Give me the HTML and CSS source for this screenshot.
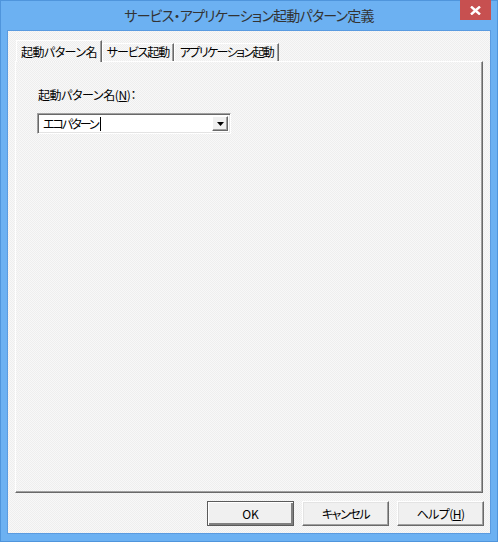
FILE: index.html
```html
<!DOCTYPE html>
<html lang="ja">
<head>
<meta charset="utf-8">
<title>サービス・アプリケーション起動パターン定義</title>
<link rel="stylesheet" href="styles.css">
</head>
<body>
<div class="window">
  <div class="titlebar">
    <div class="title">サービス・アプリケーション起動パターン定義</div>
    <div class="close">
      <svg width="11" height="9" viewBox="0 0 11 9"><path d="M1 0.5 L10 8.5 M10 0.5 L1 8.5" stroke="#fff" stroke-width="2.4" fill="none"/></svg>
    </div>
  </div>
  <div class="client">
    <div class="tabs">
      <div class="tab tab-selected tab-1">起動パターン名</div>
      <div class="tab tab-2">サービス起動</div>
      <div class="tab tab-3">アプリケーション起動</div>
    </div>
    <div class="panel">
      <div class="label">起動パターン名(<u>N</u>)：</div>
      <div class="combo">
        <div class="combo-text">エコパターン<span class="caret"></span></div>
        <div class="combo-btn">
          <svg width="7" height="4" viewBox="0 0 7 4"><path d="M0 0 H7 L3.5 4 Z" fill="#000"/></svg>
        </div>
      </div>
    </div>
    <div class="buttons">
      <div class="btn btn-default">OK</div>
      <div class="btn btn-kana">キャンセル</div>
      <div class="btn btn-help">ヘルプ(<u>H</u>)</div>
    </div>
  </div>
</div>
</body>
</html>
```
FILE: styles.css
```css
html, body {
  margin: 0;
  padding: 0;
  background: #6aaef0;
}
body {
  font-family: "Noto Sans CJK JP", "Noto Sans", sans-serif;
  font-feature-settings: "palt";
  font-size: 12px;
  color: #000;
}
.window {
  box-sizing: border-box;
  width: 498px;
  height: 542px;
  background: #6cb1f2;
  border: 1px solid #4f95dc;
  display: flex;
  flex-direction: column;
}
.titlebar {
  position: relative;
  height: 29px;
  flex: none;
}
.title {
  text-align: center;
  line-height: 28px;
  font-size: 14px;
  letter-spacing: -0.8px;
  color: #333;
}
.close {
  position: absolute;
  top: -1px;
  right: 6px;
  width: 31px;
  height: 20px;
  background: #c75050;
  display: flex;
  align-items: center;
  justify-content: center;
}
.client {
  flex: 1;
  margin: 0 6px 9px 6px;
  border: 1px solid #5a9be0;
  background: repeating-conic-gradient(#eeeeee 0 25%, #f8f8f8 0 50%) 0 0 / 2px 2px;
  padding: 9px 7px 7px 7px;
  display: flex;
  flex-direction: column;
}
.tabs {
  display: flex;
  align-items: flex-end;
  height: 21px;
  padding-left: 1px;
  position: relative;
  z-index: 1;
}
.tab {
  box-sizing: border-box;
  height: 18px;
  border-top: 1px solid #fff;
  border-left: 1px solid #fff;
  border-right: 1px solid #696969;
  box-shadow: inset -1px 0 #a0a0a0;
  text-align: center;
  line-height: 16px;
  white-space: nowrap;
  background: repeating-conic-gradient(#eeeeee 0 25%, #f8f8f8 0 50%) 0 0 / 2px 2px;
}
.tab-selected {
  height: 22px;
  margin-bottom: -1px;
  line-height: 21px;
}
.tab-1 { width: 86px; letter-spacing: -0.5px; }
.tab-2 { width: 72px; letter-spacing: -1.1px; }
.tab-3 { width: 105px; letter-spacing: -1.6px; }
.panel {
  box-sizing: border-box;
  height: 432px;
  border-top: 1px solid #fff;
  border-left: 1px solid #fff;
  border-right: 1px solid #696969;
  border-bottom: 1px solid #696969;
  box-shadow: inset -1px -1px #a0a0a0;
  padding: 24px 20px 0 21px;
}
.label {
  line-height: 17px;
  padding-left: 1px;
  letter-spacing: -0.4px;
}
.combo {
  box-sizing: border-box;
  margin-top: 10px;
  width: 194px;
  height: 21px;
  border-top: 1px solid #a0a0a0;
  border-left: 1px solid #a0a0a0;
  border-right: 1px solid #fff;
  border-bottom: 1px solid #fff;
  box-shadow: inset 1px 1px #696969, inset -1px -1px #e3e3e3;
  background: #fff;
  display: flex;
  align-items: stretch;
  padding: 2px;
}
.combo-text {
  flex: 1;
  padding-left: 3px;
  line-height: 17px;
  letter-spacing: -2px;
  display: flex;
  align-items: center;
}
.caret {
  display: inline-block;
  width: 1px;
  height: 14px;
  background: #000;
  margin-left: 2px;
}
.combo-btn {
  width: 16px;
  box-sizing: border-box;
  background: #f0f0f0;
  border-top: 1px solid #fff;
  border-left: 1px solid #fff;
  border-right: 1px solid #696969;
  border-bottom: 1px solid #696969;
  box-shadow: inset -1px -1px #a0a0a0;
  display: flex;
  align-items: center;
  justify-content: center;
}
.buttons {
  margin-top: 8px;
  margin-right: -1px;
  display: flex;
  justify-content: flex-end;
  gap: 8px;
}
.btn {
  box-sizing: border-box;
  width: 87px;
  height: 25px;
  background: #f0f0f0;
  border-top: 1px solid #fff;
  border-left: 1px solid #fff;
  border-right: 1px solid #696969;
  border-bottom: 1px solid #696969;
  box-shadow: inset -1px -1px #a0a0a0, inset 1px 1px #e3e3e3;
  display: flex;
  align-items: center;
  justify-content: center;
  line-height: 16px;
}
.btn-kana {
  letter-spacing: -1.4px;
}
.btn-help {
  letter-spacing: -0.6px;
}
.btn-default {
  border: 1px solid #5a5a5a;
  box-shadow: inset 1px 1px #fff, inset -2px -2px #808080, inset -1px -1px #696969;
}
```
